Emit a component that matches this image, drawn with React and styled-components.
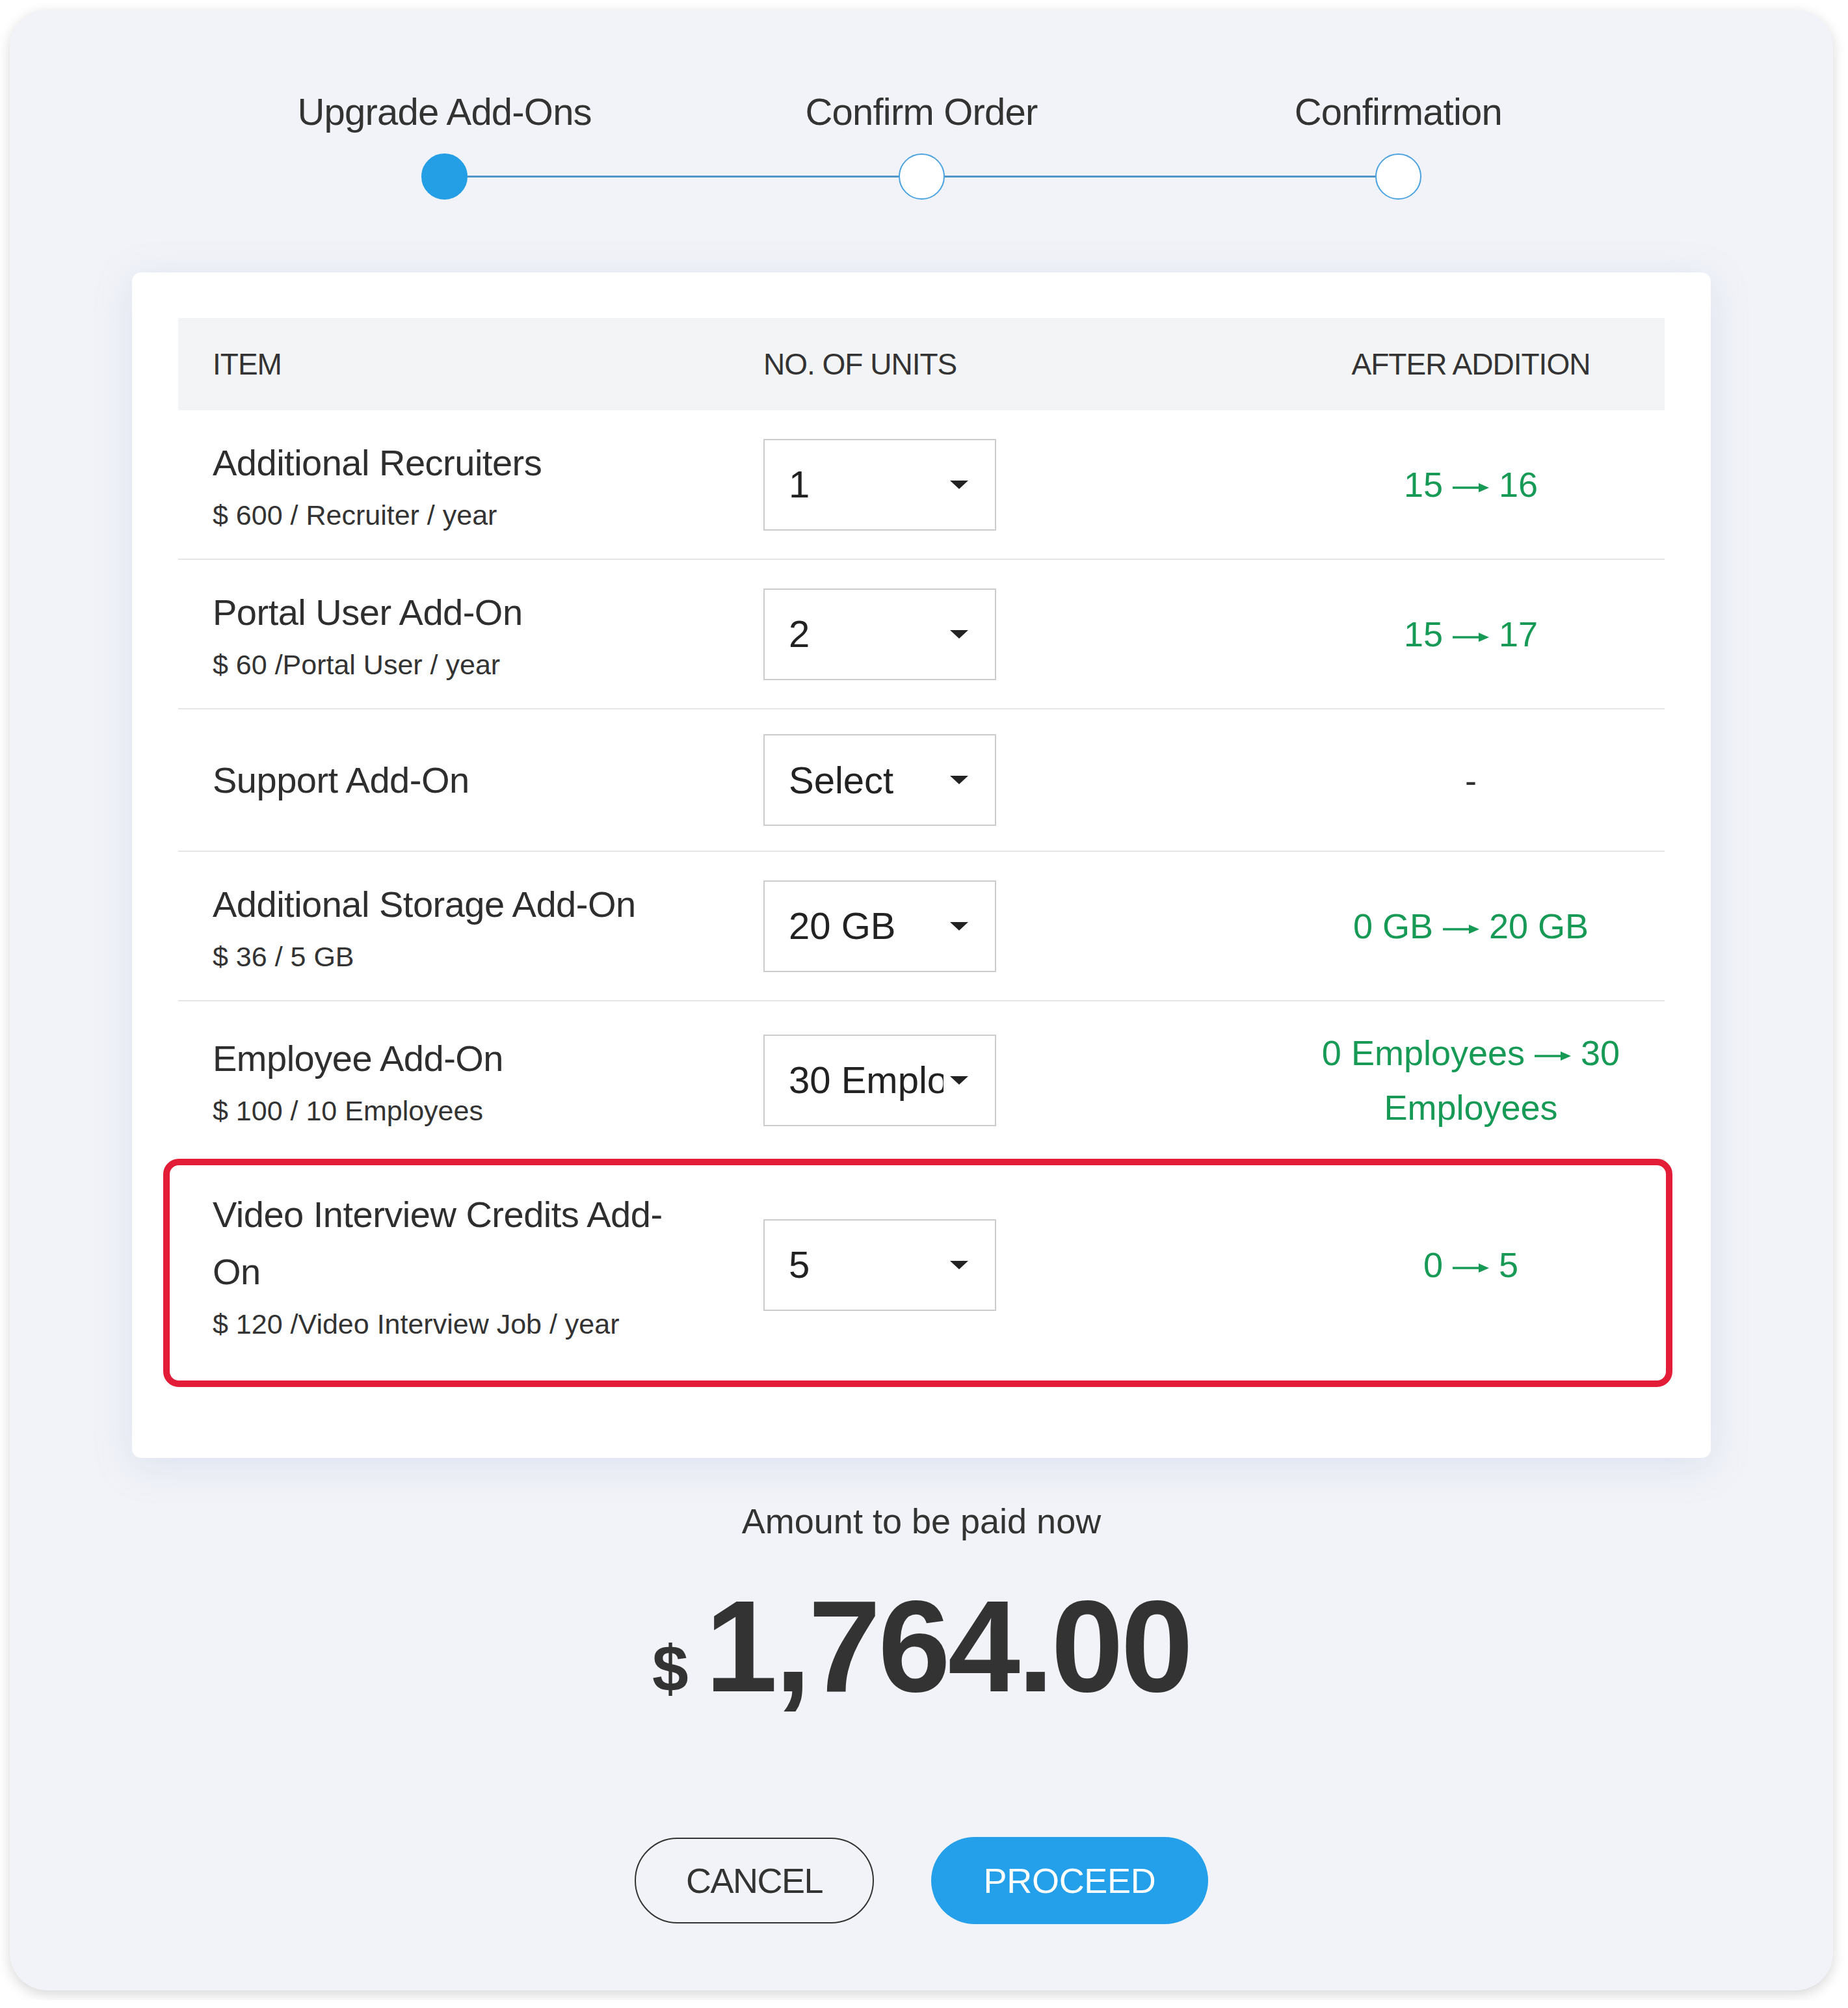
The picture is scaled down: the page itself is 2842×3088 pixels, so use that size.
import styled, { createGlobalStyle } from "styled-components"

const GlobalStyle = createGlobalStyle`
    * { box-sizing: border-box; }
    html, body { margin: 0; padding: 0; background: #ffffff; }
    body {
        font-family: "Liberation Sans", Arial, Helvetica, sans-serif;
        color: #333333;
    }
`

const Shell = styled.div`
    width: 2804px;
    margin: 15px;
    padding: 128px 0 102px;
    display: flex;
    flex-direction: column;
    align-items: center;
    background: #f1f3f8;
    border-radius: 58px;
    box-shadow: 0 6px 20px rgba(0, 0, 0, 0.16);
`

const Steps = styled.div`
    width: 2200px;
    display: flex;
    flex-direction: column;
`

const StepLabels = styled.div`
    display: grid;
    grid-template-columns: repeat(3, 1fr);
`

const StepLabel = styled.div`
    text-align: center;
    font-size: 58px;
    line-height: 58px;
    letter-spacing: -0.8px;
    color: #333333;
`

const Track = styled.div`
    display: flex;
    align-items: center;
    margin-top: 35px;
    padding: 0 331px;
`

const Dot = styled.div`
    width: 71px;
    height: 71px;
    flex-shrink: 0;
    border-radius: 50%;
    background: ${p => (p.$active ? "#249fe6" : "#ffffff")};
    border: 2px solid ${p => (p.$active ? "#249fe6" : "#4aa3e0")};
`

const Line = styled.div`
    flex: 1;
    height: 3px;
    background: #4f97c9;
`

const Card = styled.div`
    width: 2428px;
    margin-top: 112px;
    padding: 70px 71px 109px;
    background: #ffffff;
    border-radius: 14px;
    box-shadow: 0 12px 60px rgba(150, 165, 205, 0.22);
`

const HeadRow = styled.div`
    display: grid;
    grid-template-columns: 900px 790px 1fr;
    align-items: center;
    height: 142px;
    background: #f3f4f6;
    font-size: 46px;
    letter-spacing: -1px;
    color: #333333;
`

const Row = styled.div`
    display: grid;
    grid-template-columns: 900px 790px 1fr;
    align-items: center;
    min-height: 219px;
    padding: 37px 0;
    border-bottom: 2px solid #e6e6e6;
    ${p => p.$highlight && `
        margin: -2px -12px 0 -23px;
        padding: 32px 2px 57px 13px;
        border: 10px solid #e31c37;
        border-radius: 24px;
    `}
`

const ItemCell = styled.div`
    padding: 0 114px 0 53px;
`

const UnitsCell = styled.div`
    display: flex;
    align-items: center;
`

const AfterCell = styled.div`
    padding: 0 40px;
    text-align: center;
`

const Title = styled.div`
    font-size: 56px;
    line-height: 88px;
    letter-spacing: -0.5px;
    color: #2e2e2e;
`

const Sub = styled.div`
    margin-top: 6px;
    font-size: 43px;
    line-height: 60px;
    color: #333333;
`

const SelectBox = styled.div`
    width: 358px;
    height: 141px;
    display: flex;
    align-items: center;
    padding: 0 41px 0 37px;
    background: #ffffff;
    border: 2px solid #cccccc;
    font-size: 58px;
    color: #222222;
`

const SelectText = styled.span`
    flex: 1;
    overflow: hidden;
    white-space: nowrap;
    line-height: 1.4;
`

const Caret = styled.span`
    flex-shrink: 0;
    width: 0;
    height: 0;
    margin-left: 10px;
    border-left: 14px solid transparent;
    border-right: 14px solid transparent;
    border-top: 13px solid #222222;
`

const Change = styled.div`
    font-size: 54px;
    line-height: 84px;
    color: ${p => (p.$empty ? "#333333" : "#179a55")};
`

const ArrowSvg = styled.svg`
    width: 56px;
    height: 20px;
    vertical-align: middle;
`

const Summary = styled.div`
    margin-top: 65px;
    display: flex;
    flex-direction: column;
    align-items: center;
`

const AmountLabel = styled.div`
    font-size: 54px;
    line-height: 65px;
    color: #333333;
`

const Amount = styled.div`
    margin-top: 60px;
    display: flex;
    align-items: baseline;
    font-weight: 700;
    color: #333333;
`

const Currency = styled.span`
    font-size: 100px;
    margin-right: 26px;
`

const Value = styled.span`
    font-size: 200px;
    line-height: 200px;
    letter-spacing: -4px;
`

const Actions = styled.div`
    margin-top: 193px;
    display: flex;
    align-items: center;
    gap: 88px;
`

const Button = styled.button`
    font-family: inherit;
    font-size: 54px;
    border-radius: 70px;
    cursor: pointer;
    ${p => p.$primary ? `
        width: 426px;
        height: 134px;
        border: none;
        background: #24a0ea;
        color: #ffffff;
        letter-spacing: -0.3px;
    ` : `
        width: 368px;
        height: 132px;
        border: 2px solid #333333;
        background: transparent;
        color: #333333;
        letter-spacing: -1.5px;
    `}
`

const Arrow = () => (
    <ArrowSvg viewBox="0 0 56 20">
        <line x1="0" y1="10" x2="42" y2="10" stroke="currentColor" strokeWidth="3.5" />
        <polygon points="40,3 56,10 40,17" fill="currentColor" />
    </ArrowSvg>
)

const rows = [
    { title: "Additional Recruiters", sub: "$ 600 / Recruiter / year", units: "1", from: "15", to: "16" },
    { title: "Portal User Add-On", sub: "$ 60 /Portal User / year", units: "2", from: "15", to: "17" },
    { title: "Support Add-On", units: "Select" },
    { title: "Additional Storage Add-On", sub: "$ 36 / 5 GB", units: "20 GB", from: "0 GB", to: "20 GB" },
    { title: "Employee Add-On", sub: "$ 100 / 10 Employees", units: "30 Employees", from: "0 Employees", to: "30 Employees" },
    { title: "Video Interview Credits Add-On", sub: "$ 120 /Video Interview Job / year", units: "5", from: "0", to: "5", highlight: true },
]

const steps = ["Upgrade Add-Ons", "Confirm Order", "Confirmation"]

const App = () => {
    return (
        <>
            <GlobalStyle />
            <Shell>
                <Steps>
                    <StepLabels>
                        {steps.map(s => <StepLabel key={s}>{s}</StepLabel>)}
                    </StepLabels>
                    <Track>
                        <Dot $active />
                        <Line />
                        <Dot />
                        <Line />
                        <Dot />
                    </Track>
                </Steps>

                <Card>
                    <HeadRow>
                        <ItemCell>ITEM</ItemCell>
                        <UnitsCell>NO. OF UNITS</UnitsCell>
                        <AfterCell>AFTER ADDITION</AfterCell>
                    </HeadRow>
                    {rows.map(r => (
                        <Row key={r.title} $highlight={r.highlight}>
                            <ItemCell>
                                <Title>{r.title}</Title>
                                {r.sub ? <Sub>{r.sub}</Sub> : null}
                            </ItemCell>
                            <UnitsCell>
                                <SelectBox>
                                    <SelectText>{r.units}</SelectText>
                                    <Caret />
                                </SelectBox>
                            </UnitsCell>
                            <AfterCell>
                                {r.from ? (
                                    <Change>{r.from} <Arrow /> {r.to}</Change>
                                ) : (
                                    <Change $empty>-</Change>
                                )}
                            </AfterCell>
                        </Row>
                    ))}
                </Card>

                <Summary>
                    <AmountLabel>Amount to be paid now</AmountLabel>
                    <Amount>
                        <Currency>$</Currency>
                        <Value>1,764.00</Value>
                    </Amount>
                </Summary>

                <Actions>
                    <Button>CANCEL</Button>
                    <Button $primary>PROCEED</Button>
                </Actions>
            </Shell>
        </>
    )
}

export default App
